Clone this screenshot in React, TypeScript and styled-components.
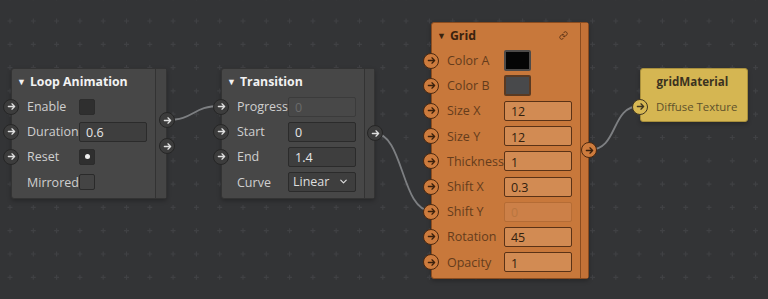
import React from 'react';
import styled, { createGlobalStyle, css } from 'styled-components';
import { Link, ChevronDown } from 'lucide-react';

type Tone = 'grey' | 'orange' | 'yellow';

const palette = {
  grey: {
    body: '#474747',
    border: '#333333',
    title: '#f2f2f2',
    label: '#cfcfcf',
    inputBg: '#3e3e3e',
    inputBorder: '#2b2b2b',
    inputText: '#e6e6e6',
    portBg: '#3c3c3c',
    portBorder: '#262626',
    arrow: '#e0e0e0',
    strip: '#454545',
  },
  orange: {
    body: '#c8783b',
    border: '#8a4c1f',
    title: '#3a220e',
    label: '#653c1b',
    inputBg: '#d28b53',
    inputBorder: '#5a3216',
    inputText: '#33200e',
    portBg: '#cd7b3d',
    portBorder: '#4a2810',
    arrow: '#3a200c',
    strip: '#c37237',
  },
  yellow: {
    body: '#d5b652',
    border: '#a88f3c',
    title: '#3b3220',
    label: '#5e522c',
    inputBg: '#d5b652',
    inputBorder: '#5e522c',
    inputText: '#3b3220',
    portBg: '#d8b954',
    portBorder: '#3e3420',
    arrow: '#3e3420',
    strip: '#d5b652',
  },
};

const GlobalStyle = createGlobalStyle`
  html, body {
    margin: 0;
    padding: 0;
    background: #333436;
  }
  body {
    font-family: "Open Sans", "Noto Sans", sans-serif;
  }
`;

const Canvas = styled.div`
  position: relative;
  width: 768px;
  height: 299px;
  overflow: hidden;
  background: #333436;
`;

const Layer = styled.svg`
  position: absolute;
  left: 0;
  top: 0;
  width: 768px;
  height: 299px;
`;

const NodeBox = styled.div<{ $tone: Tone; $x: number; $y: number; $w: number }>`
  position: absolute;
  left: ${(p) => p.$x}px;
  top: ${(p) => p.$y}px;
  width: ${(p) => p.$w}px;
  display: flex;
  background: ${(p) => palette[p.$tone].body};
  border: 1px solid ${(p) => palette[p.$tone].border};
  border-radius: 3px;
  box-sizing: border-box;
  box-shadow: 0 2px 4px rgba(0, 0, 0, 0.25);
`;

const Main = styled.div`
  flex: 1;
  display: flex;
  flex-direction: column;
  padding-bottom: 3px;
`;

const Strip = styled.div<{ $tone: Tone; $top: number }>`
  position: relative;
  width: 10px;
  display: flex;
  flex-direction: column;
  align-items: flex-end;
  gap: 10px;
  padding-top: ${(p) => p.$top}px;
  background: ${(p) => palette[p.$tone].strip};
  border-left: 1px solid ${(p) => palette[p.$tone].border};
`;

const Header = styled.div<{ $tone: Tone; $center?: boolean; $small?: boolean }>`
  height: 25px;
  display: flex;
  align-items: center;
  justify-content: ${(p) => (p.$center ? 'center' : 'flex-start')};
  gap: 4px;
  padding: 0 8px 0 5px;
  color: ${(p) => palette[p.$tone].title};
  font-weight: 700;
  font-size: ${(p) => (p.$small ? 11.6 : 12.3)}px;
`;

const Caret = styled.span`
  font-size: 9px;
  line-height: 1;
`;

const Spacer = styled.span`
  flex: 1;
`;

const Row = styled.div`
  position: relative;
  height: 25.2px;
  display: flex;
  align-items: center;
  padding-left: 15px;
  padding-right: 8px;
`;

const Label = styled.span<{ $tone: Tone; $small?: boolean }>`
  flex: 1;
  color: ${(p) => palette[p.$tone].label};
  font-size: ${(p) => (p.$small ? 11.4 : 12.5)}px;
  white-space: nowrap;
`;

const PortDot = styled.span<{ $tone: Tone; $side: 'in' | 'out' }>`
  width: 16px;
  height: 16px;
  box-sizing: border-box;
  border-radius: 50%;
  display: flex;
  align-items: center;
  justify-content: center;
  background: ${(p) => palette[p.$tone].portBg};
  border: 1.5px solid ${(p) => palette[p.$tone].portBorder};
  color: ${(p) => palette[p.$tone].arrow};
  ${(p) =>
    p.$side === 'in'
      ? css`
          position: absolute;
          left: -9px;
          top: 4.6px;
        `
      : css`
          margin-right: -9px;
        `}
`;

const Field = styled.div<{ $tone: Tone; $disabled?: boolean }>`
  width: 68px;
  height: 20px;
  box-sizing: border-box;
  display: flex;
  align-items: center;
  padding: 2px 6px 0;
  font-size: 12.5px;
  background: ${(p) => palette[p.$tone].inputBg};
  border: 1px solid ${(p) => palette[p.$tone].inputBorder};
  border-radius: 2px;
  color: ${(p) => (p.$disabled ? (p.$tone === 'grey' ? '#6a6a6a' : '#b9763f') : palette[p.$tone].inputText)};
  ${(p) =>
    p.$disabled &&
    css`
      border-color: ${p.$tone === 'grey' ? '#3b3b3b' : '#b56c35'};
      background: ${p.$tone === 'grey' ? '#484848' : '#cc8048'};
    `}
`;

const Select = styled(Field)`
  justify-content: space-between;
  padding: 0 6px 1px 4px;
  color: #dedede;
`;

const Check = styled.div<{ $filled?: boolean }>`
  width: 16px;
  height: 16px;
  box-sizing: border-box;
  margin-right: 52px;
  border-radius: 2px;
  display: flex;
  align-items: center;
  justify-content: center;
  background: ${(p) => (p.$filled ? '#2f2f2f' : '#444444')};
  border: 1px solid ${(p) => (p.$filled ? '#2c2c2c' : '#2a2a2a')};
`;

const Dot = styled.span`
  width: 5px;
  height: 5px;
  border-radius: 50%;
  background: #f0f0f0;
`;

const Swatch = styled.div<{ $color: string; $edge: string }>`
  width: 27px;
  height: 21px;
  margin-right: 41px;
  box-sizing: border-box;
  border-radius: 2px;
  background: ${(p) => p.$color};
  border: 2px solid ${(p) => p.$edge};
`;

const LinkMark = styled.span`
  display: flex;
  color: #5a3216;
  margin-right: 4px;
`;

const TexRow = styled(Row)`
  padding-left: 15px;
  height: 24px;
`;

const Arrow = () => (
  <svg width="9" height="9" viewBox="0 0 10 10" fill="none" stroke="currentColor" strokeWidth="1.4" strokeLinecap="round" strokeLinejoin="round">
    <path d="M1.5 5h7M5.5 2l3 3-3 3" />
  </svg>
);

const Port = ({ tone, side = 'in' }: { tone: Tone; side?: 'in' | 'out' }) => (
  <PortDot $tone={tone} $side={side}>
    <Arrow />
  </PortDot>
);

const Input = ({ tone, value, disabled }: { tone: Tone; value: string; disabled?: boolean }) => (
  <Field $tone={tone} $disabled={disabled}>
    {value}
  </Field>
);

const crossPositions = () => {
  const items: React.ReactNode[] = [];
  for (let i = 0; i < 34; i++) {
    for (let j = 0; j < 13; j++) {
      const x = 10 + i * 23.3;
      const y = -2.3 + j * 23.3;
      items.push(<path key={`${i}-${j}`} d={`M${x - 2.5} ${y}h5M${x} ${y - 2.5}v5`} />);
    }
  }
  return items;
};

const Wire = ({ from, to }: { from: [number, number]; to: [number, number] }) => {
  const dx = Math.max(30, (to[0] - from[0]) * 0.5);
  return (
    <path
      d={`M${from[0]} ${from[1]} C${from[0] + dx} ${from[1]} ${to[0] - dx} ${to[1]} ${to[0]} ${to[1]}`}
      stroke="#7d7f82"
      strokeWidth="1.8"
      fill="none"
    />
  );
};

export default function App() {
  return (
    <Canvas>
      <GlobalStyle />
      <Layer>
        <g stroke="#404144" strokeWidth="1.2">{crossPositions()}</g>
        <Wire from={[166, 120]} to={[221, 106]} />
        <Wire from={[374, 133]} to={[431, 211]} />
        <Wire from={[589, 150]} to={[640, 106]} />
      </Layer>

      {/* Loop Animation */}
      <NodeBox $tone="grey" $x={11} $y={68} $w={156}>
        <Main>
          <Header $tone="grey">
            <Caret>▼</Caret>Loop Animation
          </Header>
          <Row>
            <Port tone="grey" />
            <Label $tone="grey">Enable</Label>
            <Check $filled />
          </Row>
          <Row>
            <Port tone="grey" />
            <Label $tone="grey">Duration</Label>
            <Input tone="grey" value="0.6" />
          </Row>
          <Row>
            <Port tone="grey" />
            <Label $tone="grey">Reset</Label>
            <Check $filled>
              <Dot />
            </Check>
          </Row>
          <Row>
            <Label $tone="grey">Mirrored</Label>
            <Check />
          </Row>
        </Main>
        <Strip $tone="grey" $top={43}>
          <Port tone="grey" side="out" />
          <Port tone="grey" side="out" />
        </Strip>
      </NodeBox>

      {/* Transition */}
      <NodeBox $tone="grey" $x={221} $y={68} $w={154}>
        <Main>
          <Header $tone="grey">
            <Caret>▼</Caret>Transition
          </Header>
          <Row>
            <Port tone="grey" />
            <Label $tone="grey">Progress</Label>
            <Input tone="grey" value="0" disabled />
          </Row>
          <Row>
            <Port tone="grey" />
            <Label $tone="grey">Start</Label>
            <Input tone="grey" value="0" />
          </Row>
          <Row>
            <Port tone="grey" />
            <Label $tone="grey">End</Label>
            <Input tone="grey" value="1.4" />
          </Row>
          <Row>
            <Label $tone="grey">Curve</Label>
            <Select $tone="grey">
              Linear
              <ChevronDown size={11} strokeWidth={2.5} />
            </Select>
          </Row>
        </Main>
        <Strip $tone="grey" $top={56}>
          <Port tone="grey" side="out" />
        </Strip>
      </NodeBox>

      {/* Grid */}
      <NodeBox $tone="orange" $x={431} $y={22} $w={158}>
        <Main>
          <Header $tone="orange">
            <Caret>▼</Caret>Grid
            <Spacer />
            <LinkMark>
              <Link size={9} strokeWidth={2.4} />
            </LinkMark>
          </Header>
          <Row>
            <Port tone="orange" />
            <Label $tone="orange">Color A</Label>
            <Swatch $color="#050505" $edge="#4d4a48" />
          </Row>
          <Row>
            <Port tone="orange" />
            <Label $tone="orange">Color B</Label>
            <Swatch $color="#48494b" $edge="#5a3a22" />
          </Row>
          <Row>
            <Port tone="orange" />
            <Label $tone="orange">Size X</Label>
            <Input tone="orange" value="12" />
          </Row>
          <Row>
            <Port tone="orange" />
            <Label $tone="orange">Size Y</Label>
            <Input tone="orange" value="12" />
          </Row>
          <Row>
            <Port tone="orange" />
            <Label $tone="orange">Thickness</Label>
            <Input tone="orange" value="1" />
          </Row>
          <Row>
            <Port tone="orange" />
            <Label $tone="orange">Shift X</Label>
            <Input tone="orange" value="0.3" />
          </Row>
          <Row>
            <Port tone="orange" />
            <Label $tone="orange">Shift Y</Label>
            <Input tone="orange" value="0" disabled />
          </Row>
          <Row>
            <Port tone="orange" />
            <Label $tone="orange">Rotation</Label>
            <Input tone="orange" value="45" />
          </Row>
          <Row>
            <Port tone="orange" />
            <Label $tone="orange">Opacity</Label>
            <Input tone="orange" value="1" />
          </Row>
        </Main>
        <Strip $tone="orange" $top={119}>
          <Port tone="orange" side="out" />
        </Strip>
      </NodeBox>

      {/* gridMaterial */}
      <NodeBox $tone="yellow" $x={640} $y={68} $w={108}>
        <Main>
          <Header $tone="yellow" $center $small>
            gridMaterial
          </Header>
          <TexRow>
            <Port tone="yellow" />
            <Label $tone="yellow" $small>
              Diffuse Texture
            </Label>
          </TexRow>
        </Main>
      </NodeBox>
    </Canvas>
  );
}
